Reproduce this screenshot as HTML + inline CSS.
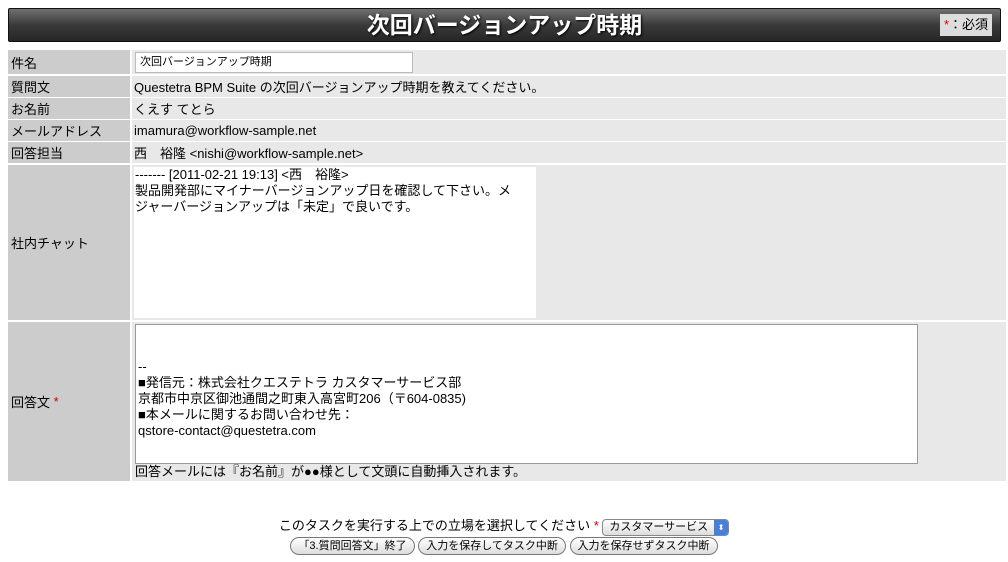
<!DOCTYPE html><html><head><meta charset="utf-8"><style>
body{margin:0;width:1008px;height:562px;background:#fff;font-family:"Liberation Sans","Noto Sans CJK JP",sans-serif;font-size:13px;color:#000;position:relative;overflow:hidden}
.a{position:absolute}
.hdr{left:8px;top:8px;width:991px;height:32px;background:linear-gradient(#707070,#3a3a3a 50%,#262626);border:1px solid #111;border-radius:2px;color:#fff;font-size:23px;font-weight:bold;text-align:center;line-height:32px;text-shadow:1px 1px 2px #000}
.req{right:8px;top:5px;width:52px;height:22px;background:#ddd;color:#000;font-size:13px;font-weight:normal;line-height:22px;text-align:center;text-shadow:none;position:absolute}
.l{left:8px;width:122px;background:#cccccc;padding-left:3px;box-sizing:border-box;display:flex;align-items:center}
.v{left:132px;width:874px;background:#e8e8e8;padding-left:2px;box-sizing:border-box;display:flex;align-items:center}
.btn{display:inline-block;border:1px solid #777;border-radius:10px;background:linear-gradient(#fff,#ddd);font-size:11px;padding:1px 7px;height:14px;line-height:14px}
</style></head><body>
<div class="a hdr">次回バージョンアップ時期<span class="req"><span style="color:#d00">*</span>：必須</span></div>
<div class="a l" style="top:50px;height:24px">件名</div>
<div class="a v" style="top:50px;height:24px"><div style="background:#fff;border:1px solid #bbb;width:272px;height:19px;font-size:11px;line-height:19px;padding-left:4px;margin-left:1px">次回バージョンアップ時期</div></div>
<div class="a l" style="top:76px;height:21px">質問文</div>
<div class="a v" style="top:76px;height:21px">Questetra BPM Suite の次回バージョンアップ時期を教えてください。</div>
<div class="a l" style="top:98px;height:21px">お名前</div>
<div class="a v" style="top:98px;height:21px">くえす てとら</div>
<div class="a l" style="top:120px;height:21px">メールアドレス</div>
<div class="a v" style="top:120px;height:21px">imamura@workflow-sample.net</div>
<div class="a l" style="top:142px;height:21px">回答担当</div>
<div class="a v" style="top:142px;height:21px">西　裕隆 &lt;nishi@workflow-sample.net&gt;</div>
<div class="a l" style="top:165px;height:155px">社内チャット</div>
<div class="a v" style="top:165px;height:155px;align-items:flex-start"><div style="background:#fff;width:401px;height:151px;margin-top:2px;line-height:16px;padding-left:1px">------- [2011-02-21 19:13] &lt;西　裕隆&gt;<br>製品開発部にマイナーバージョンアップ日を確認して下さい。メ<br>ジャーバージョンアップは「未定」で良いです。</div></div>
<div class="a l" style="top:322px;height:159px">回答文 <span style="color:#c00">&nbsp;*</span></div>
<div class="a v" style="top:322px;height:159px;display:block">
<div style="background:#fff;border:1px solid #999;width:783px;height:140px;margin-top:2px;margin-left:1px;padding:2px 2px;box-sizing:border-box;line-height:16px"><br><br>--<br>■発信元：株式会社クエステトラ カスタマーサービス部<br>京都市中京区御池通間之町東入高宮町206（〒604-0835)<br>■本メールに関するお問い合わせ先：<br>qstore-contact@questetra.com</div>
<div style="line-height:16px;margin-left:1px">回答メールには『お名前』が●●様として文頭に自動挿入されます。</div></div>
<div class="a" style="left:0;width:1008px;top:515px;text-align:center;font-size:13px">このタスクを実行する上での立場を選択してください <span style="color:#c00">*</span> <span style="display:inline-block;border:1px solid #888;border-radius:4px;background:linear-gradient(#fff,#ddd);font-size:11px;padding:0 20px 0 6px;height:15px;line-height:15px;position:relative">カスタマーサービス<span style="position:absolute;right:0;top:0;width:14px;height:15px;background:#4a7fd8;border-radius:0 3px 3px 0;color:#fff;font-size:8px;text-align:center">⬍</span></span></div>
<div class="a" style="left:0;width:1008px;top:537px;text-align:center"><span class="btn">「3.質問回答文」終了</span> <span class="btn">入力を保存してタスク中断</span> <span class="btn">入力を保存せずタスク中断</span></div>
</body></html>
